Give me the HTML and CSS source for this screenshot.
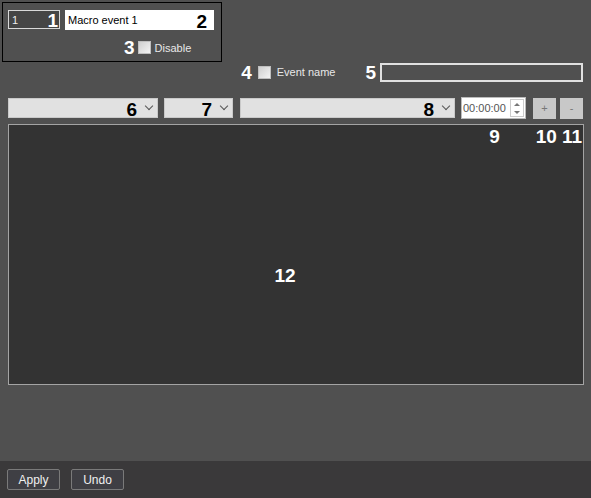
FILE: index.html
```html
<!DOCTYPE html>
<html lang="en">
<head>
    <meta charset="UTF-8">
    <title>Macro event</title>
    <link rel="stylesheet" href="styles.css">
</head>
<body>
    <div class="page">
        <div class="macro-box">
            <div class="macro-row">
                <div class="field field-id"><span>1</span><b class="num">1</b></div>
                <div class="field field-name"><span>Macro event 1</span><b class="num dark">2</b></div>
            </div>
            <div class="disable-row">
                <b class="num">3</b>
                <span class="check"></span>
                <span class="check-label">Disable</span>
            </div>
        </div>

        <div class="event-row">
            <b class="num">4</b>
            <span class="check"></span>
            <span class="check-label small">Event name</span>
            <b class="num num-5">5</b>
            <div class="field field-event"></div>
        </div>

        <div class="toolbar">
            <div class="combo combo-6"><b class="num dark">6</b><span class="chevron"></span></div>
            <div class="combo combo-7"><b class="num dark">7</b><span class="chevron"></span></div>
            <div class="combo combo-8"><b class="num dark">8</b><span class="chevron"></span></div>
            <div class="time">
                <span>00:00:00</span>
                <div class="spin">
                    <span class="spin-up"></span>
                    <span class="spin-down"></span>
                </div>
            </div>
            <div class="tool-btn tool-add">+</div>
            <div class="tool-btn">-</div>
        </div>

        <div class="panel">
            <div class="panel-nums">
                <b class="num n9">9</b>
                <b class="num n10">10</b>
                <b class="num n11">11</b>
            </div>
            <b class="num n12">12</b>
        </div>

        <div class="spacer"></div>

        <div class="footer">
            <button class="btn">Apply</button>
            <button class="btn">Undo</button>
        </div>
    </div>
</body>
</html>
```

FILE: styles.css
```css
body {
    margin: 0;
    font-family: "Liberation Sans", Arial, sans-serif;
    background: #505050;
    color: #fff;
}

.page {
    height: 498px;
    display: flex;
    flex-direction: column;
}

.num {
    font-size: 19px;
    font-weight: bold;
    color: #fff;
    line-height: 1;
}

.num.dark {
    color: #000;
}

/* top box */
.macro-box {
    margin: 2px 0 0 2px;
    width: 218px;
    height: 58px;
    border: 1px solid #000;
    box-sizing: content-box;
}

.macro-row {
    display: flex;
    gap: 5px;
    padding: 7px 0 0 5px;
}

.field {
    display: flex;
    align-items: center;
    justify-content: space-between;
    box-sizing: border-box;
    font-size: 11px;
}

.field-id {
    width: 52px;
    height: 19px;
    border: 1px solid #d8d8d8;
    background: #454545;
    color: #eee;
    padding: 0 1px 0 3px;
}

.field-name {
    width: 149px;
    height: 20px;
    background: #fff;
    color: #000;
    padding: 0 7px 0 3px;
}

.field-name .num,
.field-id .num {
    margin-top: 2px;
}

.disable-row {
    display: flex;
    align-items: center;
    padding: 8px 0 0 121px;
}

.check {
    width: 11px;
    height: 11px;
    margin-left: 3px;
    border: 1px solid #bfbfbf;
    background: linear-gradient(135deg, #cfcfcf, #f4f4f4);
}

.check-label {
    margin-left: 4px;
    font-size: 11px;
    color: #e8e8e8;
}

.check-label.small {
    margin-left: 6px;
}

/* event name row */
.event-row {
    display: flex;
    align-items: center;
    justify-content: flex-end;
    padding: 1px 8px 0 0;
    height: 18px;
}

.event-row .check {
    margin-left: 6px;
}

.num-5 {
    margin-left: 30px;
}

.field-event {
    width: 203px;
    height: 19px;
    margin-left: 4px;
    border: 2px solid #e0e0e0;
}

/* toolbar */
.toolbar {
    display: flex;
    align-items: center;
    padding: 16px 0 0 8px;
    height: 22px;
}

.combo {
    height: 20px;
    box-sizing: border-box;
    background: #e1e1e1;
    border: 1px solid #c9c9c9;
    display: flex;
    align-items: center;
    justify-content: flex-end;
    padding-right: 5px;
}

.combo .num {
    margin-top: 3px;
}

.chevron {
    width: 5px;
    height: 5px;
    margin: 0 0 4px 9px;
    border-right: 1px solid #555;
    border-bottom: 1px solid #555;
    transform: rotate(45deg);
}

.combo-6 {
    width: 150px;
}

.combo-7 {
    width: 69px;
    margin-left: 6px;
}

.combo-8 {
    width: 215px;
    margin-left: 7px;
}

.time {
    width: 65px;
    height: 22px;
    box-sizing: border-box;
    margin-left: 6px;
    background: #fff;
    border: 1px solid #bbb;
    display: flex;
    align-items: center;
    justify-content: space-between;
    padding: 0 1px;
    font-size: 11px;
    color: #555;
}

.spin {
    width: 14px;
    height: 18px;
    border: 1px solid #ccc;
    box-sizing: border-box;
    display: flex;
    flex-direction: column;
    align-items: center;
    justify-content: space-around;
}

.spin-up,
.spin-down {
    width: 0;
    height: 0;
    border-left: 3px solid transparent;
    border-right: 3px solid transparent;
}

.spin-up {
    border-bottom: 3px solid #777;
}

.spin-down {
    border-top: 3px solid #777;
}

.tool-btn {
    width: 23px;
    height: 21px;
    margin-left: 4px;
    background: #c8c8c8;
    color: #777;
    font-size: 11px;
    display: flex;
    align-items: center;
    justify-content: center;
}

.tool-btn.tool-add {
    margin-left: 7px;
}

/* main area */
.panel {
    margin: 5px 0 0 8px;
    width: 574px;
    height: 259px;
    background: #333;
    border: 1px solid #a4a4a4;
    box-sizing: content-box;
    display: flex;
    flex-direction: column;
    align-items: center;
}

.panel-nums {
    align-self: stretch;
    display: flex;
    justify-content: flex-end;
    padding: 2px 1px 0 0;
}

.n10 {
    margin-left: 36px;
}

.n11 {
    margin-left: 5px;
}

.n12 {
    margin: 120px 0 0 -22px;
}

.spacer {
    flex: 1;
}

/* footer */
.footer {
    height: 37px;
    background: #3a393a;
    display: flex;
    align-items: center;
    gap: 11px;
    padding-left: 7px;
}

.btn {
    width: 53px;
    height: 21px;
    background: #3f3f44;
    border: 1px solid #7a7a7a;
    border-radius: 2px;
    color: #f0f0f0;
    font-family: "Liberation Sans", Arial, sans-serif;
    font-size: 12px;
    padding: 0;
}
```
